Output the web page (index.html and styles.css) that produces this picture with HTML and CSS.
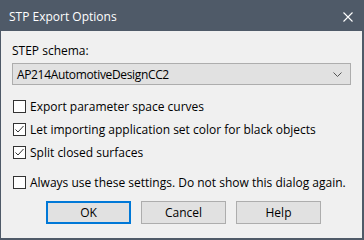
FILE: index.html
```html
<!DOCTYPE html>
<html lang="en">
<head>
  <meta charset="UTF-8">
  <title>STP Export Options</title>
  <link rel="stylesheet" href="styles.css">
</head>
<body>
  <div class="window">
    <div class="titlebar">
      <span class="title">STP Export Options</span>
      <svg class="close" width="10" height="10" viewBox="0 0 10 10">
        <path d="M0.5 0.5 L9.5 9.5 M9.5 0.5 L0.5 9.5" stroke="#fff" stroke-width="1.1" fill="none"/>
      </svg>
    </div>

    <div class="content">
      <div class="label">STEP schema:</div>
      <div class="combo">
        <span class="combo-text">AP214AutomotiveDesignCC2</span>
        <svg width="9" height="5" viewBox="0 0 9 5">
          <path d="M0.5 0.5 L4.5 4.5 L8.5 0.5" stroke="#555" stroke-width="1" fill="none"/>
        </svg>
      </div>

      <div class="checks">
        <label class="check">
          <span class="box"></span>
          Export parameter space curves
        </label>
        <label class="check">
          <span class="box"><svg width="11" height="11" viewBox="0 0 11 11"><path d="M1.5 5.5 L4 8 L9.5 2" stroke="#333" stroke-width="1" fill="none"/></svg></span>
          Let importing application set color for black objects
        </label>
        <label class="check">
          <span class="box"><svg width="11" height="11" viewBox="0 0 11 11"><path d="M1.5 5.5 L4 8 L9.5 2" stroke="#333" stroke-width="1" fill="none"/></svg></span>
          Split closed surfaces
        </label>
      </div>

      <label class="check always">
        <span class="box"></span>
        Always use these settings. Do not show this dialog again.
      </label>

      <div class="buttons">
        <button class="btn default">OK</button>
        <button class="btn">Cancel</button>
        <button class="btn">Help</button>
      </div>
    </div>
  </div>
</body>
</html>
```

FILE: styles.css
```css
html, body { margin: 0; padding: 0; }
body { font-family: 'Open Sans', Arial, sans-serif; font-size: 12px; color: #000; background: #f0f0f0; }

.window { width: 364px; height: 240px; box-sizing: border-box; background: #f0f0f0; border: 1px solid #4f5a68; border-right-width: 2px; border-bottom-width: 2px; display: flex; flex-direction: column; }

.titlebar { height: 30px; background: #4f5a68; color: #fff; display: flex; align-items: center; justify-content: space-between; padding: 0 9px 0 8px; flex-shrink: 0; }
.title { font-size: 12px; }
.close { display: block; margin-top: 1px; }

.content { padding: 12px 11px 0 11px; }
.label { line-height: 16px; }

.combo { margin-top: 4px; height: 22px; box-sizing: border-box; border: 1px solid #adadad; background: #e1e1e1; display: flex; align-items: center; justify-content: space-between; padding: 0 8px 0 4px; }
.combo-text { letter-spacing: -0.35px; }
.combo svg { display: block; }

.checks { margin-top: 10px; }
.check { display: flex; align-items: center; height: 23px; gap: 4px; padding-left: 1px; }
.box { width: 13px; height: 13px; box-sizing: border-box; border: 1px solid #333; background: #fff; display: flex; align-items: center; justify-content: center; flex-shrink: 0; }
.box svg { display: block; }
.always { margin-top: 7px; }

.buttons { margin-top: 7px; display: flex; gap: 10px; padding-left: 34px; }
.btn { width: 85px; height: 23px; box-sizing: border-box; border: 1px solid #adadad; background: #e1e1e1; font-family: inherit; font-size: 12px; color: #000; padding: 0; }
.btn.default { border: 2px solid #0078d7; }
```
